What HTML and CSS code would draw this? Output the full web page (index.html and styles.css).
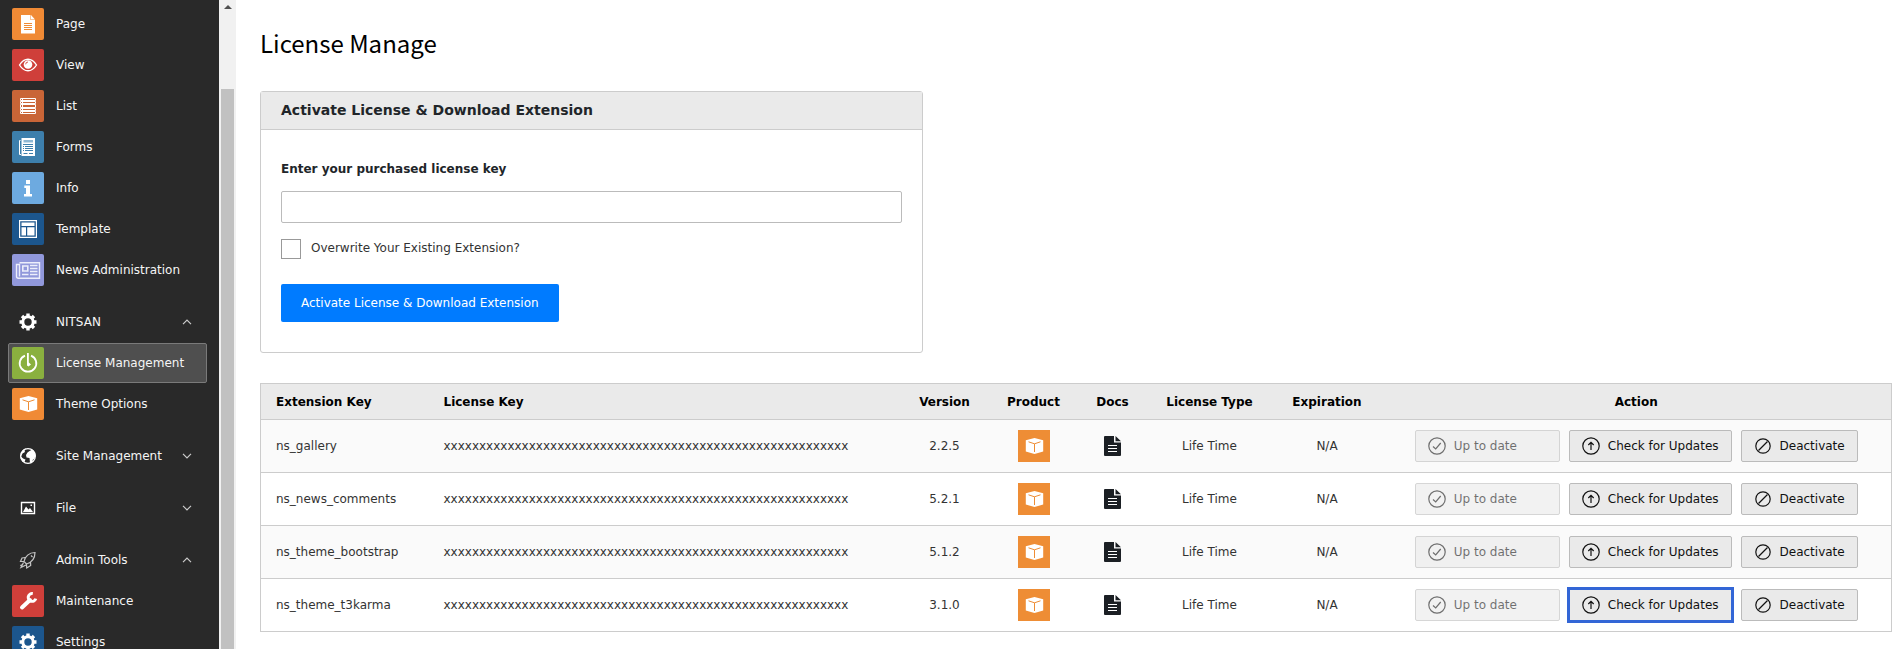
FILE: index.html
```
<!DOCTYPE html>
<html lang="en">
<head>
    <meta charset="UTF-8">
    <title>License Manage</title>
    <link rel="stylesheet" href="styles.css">
</head>
<body>
    <!-- Icon sprite -->
    <svg class="sprite" aria-hidden="true">
        <symbol id="i-page" viewBox="0 0 32 32">
            <path fill="#fff" d="M9 7h9.500v5H23v13.500H9z"/>
            <path fill="#fff" d="M19 7l4 4.400h-4z"/>
            <path stroke="#f08a35" d="M12 15.500h8M12 17.500h8M12 19.500h8M12 21.500h8"/>
        </symbol>
        <symbol id="i-view" viewBox="0 0 32 32">
            <path fill="none" stroke="#fff" stroke-width="1.400" d="M7.500 16C10 12 13 10.200 16 10.200S22 12 24.500 16C22 20 19 21.800 16 21.800S10 20 7.500 16z"/>
            <circle cx="16" cy="15.500" r="4.300" fill="#fff"/>
            <path fill="none" stroke="#cf3f3a" stroke-width=".9" d="M13.700 15.300a2.300 2.300 0 0 1 2.300-2.300"/>
        </symbol>
        <symbol id="i-list" viewBox="0 0 32 32">
            <path fill="#c96537" stroke="#fff" d="M8.500 8.500h15v2h-15zM8.500 11.500h15v2h-15zM8.500 14.500h15v3h-15zM8.500 18.500h15v2h-15zM8.500 21.500h15v2h-15z"/>
            <path stroke="#fff" d="M10.500 8v16"/>
        </symbol>
        <symbol id="i-forms" viewBox="0 0 32 32">
            <path fill="#fff" d="M9.500 7H23v18H9.500z"/>
            <path fill="none" stroke="#fff" d="M8.500 9.500h-1v14h1.500"/>
            <path fill="#8fb8d4" d="M11.500 9H21v2.500h-9.500z"/>
            <path stroke="#3d7fac" d="M11 13.500h10M11 15.500h1M13 15.500h8M11 17.500h1M13 17.500h8M11 19.500h1M13 19.500h8M11.500 22.500h4M17 22.500h4"/>
        </symbol>
        <symbol id="i-info" viewBox="0 0 32 32">
            <path fill="#fff" d="M14 8h4v4h-4zM12.300 13.500H18V22h2v2.500h-8V22h2v-6h-1.700z"/>
        </symbol>
        <symbol id="i-template" viewBox="0 0 32 32">
            <path fill="none" stroke="#fff" stroke-width="1.200" d="M7.600 7.600h16.800v16.800H7.600z"/>
            <path fill="#fff" d="M9.500 9.500h13V13h-13zM9.500 14.200h4.500v8.300H9.500zM15.200 14.200h7.300v8.300h-7.300z"/>
        </symbol>
        <symbol id="i-news" viewBox="0 0 32 32">
            <path fill="none" stroke="#eceefb" stroke-width="1.400" d="M7.500 8.700h20v15.600H6.500a2 2 0 0 1-2-2V10.500h3v12"/>
            <path fill="none" stroke="#eceefb" stroke-width="1.600" d="M10.800 12h5v5h-5z"/>
            <path stroke="#eceefb" stroke-width="1.300" d="M18 11.500h7.500M18 14.500h7.500M18 17.500h7.500M10 20.500h6.500M18 20.500h7.500"/>
        </symbol>
        <symbol id="i-power" viewBox="0 0 32 32">
            <path fill="none" stroke="#fff" stroke-width="1.800" d="M13 8.600a8.300 8.300 0 1 0 6 0"/>
            <path fill="#fff" d="M15 6h1.800v9.500l2.200 2-2.500 2-1.500-1z"/>
        </symbol>
        <symbol id="i-box" viewBox="0 0 32 32">
            <path fill="#fff" d="M16.500 8l8.700 2.200v11.300L16.500 24l-8.700-2.500V10.200z"/>
            <path fill="none" stroke="#ee8d35" stroke-width="1" d="M10.500 11.800l6 2 6-2M16.500 13.800v8.200"/>
        </symbol>
        <symbol id="i-gear" viewBox="0 0 32 32">
            <circle cx="16" cy="16" r="5.200" fill="none" stroke="#fff" stroke-width="3"/>
            <path stroke="#fff" stroke-width="3.400" d="M16 10.500v-3M16 21.500v3M10.500 16h-3M21.500 16h3M12.100 12.100L10 10M19.900 19.900L22 22M12.100 19.900L10 22M19.900 12.100L22 10"/>
        </symbol>
        <symbol id="i-globe" viewBox="0 0 32 32">
            <circle cx="16" cy="16" r="7.400" fill="none" stroke="#fff" stroke-width="1.200"/>
            <path fill="#fff" d="M14 8.500l-1.500 2 .5 1.500-2.500 1.500-1.500 3 1.500 1.500 1.500 1 1.500.5-1 2.500-2-.5-2-3.500.5-5 2.500-3.500zM17.500 11l3-1.500 2 2.500 1 3-1 4-1.500.5-1 3-2 .5-.5-5-3-.5-.5-2.500 1.500-2.500z"/>
        </symbol>
        <symbol id="i-image" viewBox="0 0 32 32">
            <path fill="none" stroke="#fff" stroke-width="1.400" d="M9.500 10.500h13v11h-13z"/>
            <path fill="#fff" d="M11 20l3-5.500 2.500 3 1.500-1.500 3 4zM18.500 12.500h1.500V14h-1.500z"/>
        </symbol>
        <symbol id="i-rocket" viewBox="0 0 32 32">
            <path fill="none" stroke="#c4c4c4" stroke-width="1.200" d="M12 17.500c1-5 5-9 11-9 0 6-3.500 10-8.500 11.500zM13.200 13.500l-3.200.5-1.500 3.500 3.500 0M18.500 18l.2 3.500-4 2.500-.2-4M11.500 18.500l-2.500 5 5-2.500M19 11.500l1.500 1.500M9.500 20.500l-1 1.500"/>
        </symbol>
        <symbol id="i-wrench" viewBox="0 0 32 32">
            <path stroke="#fff" stroke-width="4" stroke-linecap="round" d="M10 22.500l8-7.500"/>
            <path fill="none" stroke="#fff" stroke-width="3" d="M20.800 8.600a3.900 3.900 0 1 0 3 5"/>
        </symbol>
        <symbol id="i-doc" viewBox="0 0 17 20">
            <path fill="#1b1f24" d="M1 0h9v6.500h7V19a1 1 0 0 1-1 1H1a1 1 0 0 1-1-1V1a1 1 0 0 1 1-1zM11.500 0L17 5.300h-5.500z"/>
            <path stroke="#fff" stroke-width="1.200" d="M4 9.500h9M4 12.500h9M4 15.500h9"/>
        </symbol>
        <symbol id="i-check" viewBox="0 0 18 18">
            <circle cx="9" cy="9" r="8.200"/>
            <path d="M5 9.500l2.700 2.500 5-6"/>
        </symbol>
        <symbol id="i-up" viewBox="0 0 18 18">
            <circle cx="9" cy="9" r="8.200"/>
            <path d="M9 13V5.500M6.300 8L9 5.300 11.700 8"/>
        </symbol>
        <symbol id="i-ban" viewBox="0 0 18 18">
            <circle cx="9" cy="9" r="7.200"/>
            <path d="M4.500 13.500l9-9"/>
        </symbol>
        <symbol id="i-open" viewBox="0 0 10 6">
            <path fill="none" stroke="#ccc" stroke-width="1.200" d="M1 5.200l4-4 4 4"/>
        </symbol>
        <symbol id="i-closed" viewBox="0 0 10 6">
            <path fill="none" stroke="#ccc" stroke-width="1.200" d="M1 .8l4 4 4-4"/>
        </symbol>
    </svg>

    <div class="layout">
        <nav class="sidebar">
            <div class="menu-group">
                <a href="#" class="menu-item"><svg class="tile tile-orange"><use href="#i-page"/></svg>Page</a>
                <a href="#" class="menu-item"><svg class="tile tile-red"><use href="#i-view"/></svg>View</a>
                <a href="#" class="menu-item"><svg class="tile tile-rust"><use href="#i-list"/></svg>List</a>
                <a href="#" class="menu-item"><svg class="tile tile-steel"><use href="#i-forms"/></svg>Forms</a>
                <a href="#" class="menu-item"><svg class="tile tile-sky"><use href="#i-info"/></svg>Info</a>
                <a href="#" class="menu-item"><svg class="tile tile-navy"><use href="#i-template"/></svg>Template</a>
                <a href="#" class="menu-item"><svg class="tile tile-lilac"><use href="#i-news"/></svg>News Administration</a>
            </div>
            <div class="menu-group">
                <button type="button" class="menu-item" aria-expanded="true"><svg class="tile"><use href="#i-gear"/></svg>NITSAN<svg class="chevron"><use href="#i-open"/></svg></button>
                <a href="#" class="menu-item active"><svg class="tile tile-green"><use href="#i-power"/></svg>License Management</a>
                <a href="#" class="menu-item"><svg class="tile tile-orange"><use href="#i-box"/></svg>Theme Options</a>
            </div>
            <div class="menu-group">
                <button type="button" class="menu-item" aria-expanded="false"><svg class="tile"><use href="#i-globe"/></svg>Site Management<svg class="chevron"><use href="#i-closed"/></svg></button>
            </div>
            <div class="menu-group">
                <button type="button" class="menu-item" aria-expanded="false"><svg class="tile"><use href="#i-image"/></svg>File<svg class="chevron"><use href="#i-closed"/></svg></button>
            </div>
            <div class="menu-group">
                <button type="button" class="menu-item" aria-expanded="true"><svg class="tile"><use href="#i-rocket"/></svg>Admin Tools<svg class="chevron"><use href="#i-open"/></svg></button>
                <a href="#" class="menu-item"><svg class="tile tile-red"><use href="#i-wrench"/></svg>Maintenance</a>
                <a href="#" class="menu-item"><svg class="tile tile-navy"><use href="#i-gear"/></svg>Settings</a>
            </div>
        </nav>

        <div class="scrollbar" aria-hidden="true">
            <div class="scroll-up"></div>
            <div class="scroll-thumb"></div>
        </div>

        <main class="content">
            <h1>License Manage</h1>

            <form class="card">
                <h2 class="card-header">Activate License &amp; Download Extension</h2>
                <div class="card-body">
                    <label for="licenseKey" class="field-label">Enter your purchased license key</label>
                    <input type="text" id="licenseKey" class="field">
                    <div class="check-row">
                        <input type="checkbox" id="overwrite">
                        <label for="overwrite">Overwrite Your Existing Extension?</label>
                    </div>
                    <button type="button" class="btn-primary">Activate License &amp; Download Extension</button>
                </div>
            </form>

            <table class="licenses">
                <colgroup>
                    <col class="col-ext">
                    <col>
                    <col class="col-version">
                    <col class="col-product">
                    <col class="col-docs">
                    <col class="col-type">
                    <col class="col-expiration">
                    <col class="col-action">
                </colgroup>
                <thead>
                    <tr>
                        <th class="left">Extension Key</th>
                        <th class="left">License Key</th>
                        <th>Version</th>
                        <th>Product</th>
                        <th>Docs</th>
                        <th>License Type</th>
                        <th>Expiration</th>
                        <th>Action</th>
                    </tr>
                </thead>
                <tbody>
                    <tr>
                        <td class="left">ns_gallery</td>
                        <td class="left">xxxxxxxxxxxxxxxxxxxxxxxxxxxxxxxxxxxxxxxxxxxxxxxxxxxxxxxxx</td>
                        <td>2.2.5</td>
                        <td><a href="#" aria-label="Product"><svg class="product"><use href="#i-box"/></svg></a></td>
                        <td><a href="#" aria-label="Docs"><svg class="doc"><use href="#i-doc"/></svg></a></td>
                        <td>Life Time</td>
                        <td>N/A</td>
                        <td>
                            <div class="actions">
                                <button type="button" class="btn btn-status" disabled><svg><use href="#i-check"/></svg>Up to date</button>
                                <button type="button" class="btn"><svg><use href="#i-up"/></svg>Check for Updates</button>
                                <button type="button" class="btn"><svg><use href="#i-ban"/></svg>Deactivate</button>
                            </div>
                        </td>
                    </tr>
                    <tr>
                        <td class="left">ns_news_comments</td>
                        <td class="left">xxxxxxxxxxxxxxxxxxxxxxxxxxxxxxxxxxxxxxxxxxxxxxxxxxxxxxxxx</td>
                        <td>5.2.1</td>
                        <td><a href="#" aria-label="Product"><svg class="product"><use href="#i-box"/></svg></a></td>
                        <td><a href="#" aria-label="Docs"><svg class="doc"><use href="#i-doc"/></svg></a></td>
                        <td>Life Time</td>
                        <td>N/A</td>
                        <td>
                            <div class="actions">
                                <button type="button" class="btn btn-status" disabled><svg><use href="#i-check"/></svg>Up to date</button>
                                <button type="button" class="btn"><svg><use href="#i-up"/></svg>Check for Updates</button>
                                <button type="button" class="btn"><svg><use href="#i-ban"/></svg>Deactivate</button>
                            </div>
                        </td>
                    </tr>
                    <tr>
                        <td class="left">ns_theme_bootstrap</td>
                        <td class="left">xxxxxxxxxxxxxxxxxxxxxxxxxxxxxxxxxxxxxxxxxxxxxxxxxxxxxxxxx</td>
                        <td>5.1.2</td>
                        <td><a href="#" aria-label="Product"><svg class="product"><use href="#i-box"/></svg></a></td>
                        <td><a href="#" aria-label="Docs"><svg class="doc"><use href="#i-doc"/></svg></a></td>
                        <td>Life Time</td>
                        <td>N/A</td>
                        <td>
                            <div class="actions">
                                <button type="button" class="btn btn-status" disabled><svg><use href="#i-check"/></svg>Up to date</button>
                                <button type="button" class="btn"><svg><use href="#i-up"/></svg>Check for Updates</button>
                                <button type="button" class="btn"><svg><use href="#i-ban"/></svg>Deactivate</button>
                            </div>
                        </td>
                    </tr>
                    <tr>
                        <td class="left">ns_theme_t3karma</td>
                        <td class="left">xxxxxxxxxxxxxxxxxxxxxxxxxxxxxxxxxxxxxxxxxxxxxxxxxxxxxxxxx</td>
                        <td>3.1.0</td>
                        <td><a href="#" aria-label="Product"><svg class="product"><use href="#i-box"/></svg></a></td>
                        <td><a href="#" aria-label="Docs"><svg class="doc"><use href="#i-doc"/></svg></a></td>
                        <td>Life Time</td>
                        <td>N/A</td>
                        <td>
                            <div class="actions">
                                <button type="button" class="btn btn-status" disabled><svg><use href="#i-check"/></svg>Up to date</button>
                                <button type="button" class="btn highlighted"><svg><use href="#i-up"/></svg>Check for Updates</button>
                                <button type="button" class="btn"><svg><use href="#i-ban"/></svg>Deactivate</button>
                            </div>
                        </td>
                    </tr>
                </tbody>
            </table>
        </main>
    </div>
</body>
</html>
```
FILE: styles.css
```
* {
    box-sizing: border-box;
}
body {
    margin: 0;
    font-family: Verdana, "DejaVu Sans", sans-serif;
    font-size: 12px;
    line-height: 18px;
    color: #333;
    background-color: #fff;
}
button, input {
    font: inherit;
}
.sprite {
    display: none;
}
.layout {
    display: flex;
    height: 100vh;
    overflow: hidden;
}

/* Sidebar */
.sidebar {
    flex: none;
    width: 219px;
    padding: 4px 12px 0 8px;
    background-color: #292929;
    overflow: hidden;
}
.menu-group {
    display: flex;
    flex-direction: column;
    gap: 1px;
    margin-bottom: 12px;
}
.menu-item {
    display: flex;
    align-items: center;
    gap: 12px;
    width: 100%;
    height: 40px;
    padding: 3px;
    border: 1px solid transparent;
    border-radius: 2px;
    background: none;
    color: #f5f5f5;
    text-align: left;
    text-decoration: none;
}
.menu-item.active {
    background-color: #4f4f4f;
    border-color: #7a7a7a;
}
.tile {
    flex: none;
    width: 32px;
    height: 32px;
    border-radius: 2px;
}
.tile-orange { background-color: #f08a35; }
.tile-red { background-color: #cf3f3a; }
.tile-rust { background-color: #c96537; }
.tile-steel { background-color: #3d7fac; }
.tile-sky { background-color: #6daae0; }
.tile-navy { background-color: #1c568d; }
.tile-lilac { background-color: #9198db; }
.tile-green { background-color: #8ab03f; }
.chevron {
    width: 10px;
    height: 6px;
    margin-left: auto;
    margin-right: 11px;
}

/* Sidebar scrollbar */
.scrollbar {
    display: flex;
    flex-direction: column;
    flex: none;
    width: 17px;
    padding: 5px 2px 0;
    background-color: #f1f1f1;
}
.scroll-up {
    align-self: center;
    border: 4px solid transparent;
    border-top-width: 0;
    border-bottom-color: #505050;
    margin-bottom: 80px;
}
.scroll-thumb {
    flex: 1;
    background-color: #c1c1c1;
}

/* Content */
.content {
    flex: 1;
    min-width: 0;
    padding: 23px 6px 0 24px;
}
h1 {
    margin: 0 0 28px;
    font-family: "Source Sans Pro", "Noto Sans CJK SC", sans-serif;
    font-size: 24px;
    font-weight: 400;
    line-height: 40px;
    color: #000;
}
.card {
    max-width: 663px;
    margin-bottom: 30px;
    border: 1px solid #ccc;
    border-radius: 3px;
}
.card-header {
    margin: 0;
    padding: 9px 20px 10px;
    border-bottom: 1px solid #ccc;
    background-color: #eaeaea;
    font-size: 14px;
    line-height: 18px;
    color: #212529;
}
.card-body {
    padding: 30px 20px;
}
.field-label {
    display: block;
    margin-bottom: 13px;
    font-weight: bold;
    color: #212529;
}
.field {
    display: block;
    width: 100%;
    height: 32px;
    padding: 6px 12px;
    border: 1px solid #bbb;
    border-radius: 2px;
}
.check-row {
    display: flex;
    gap: 10px;
    margin: 16px 0 25px;
}
.check-row input {
    appearance: none;
    width: 20px;
    height: 20px;
    margin: 0;
    border: 1px solid #999;
}
.btn-primary {
    display: block;
    padding: 10px 20px;
    border: 0;
    border-radius: 2px;
    background-color: #007bff;
    color: #fff;
}

/* License table */
.licenses {
    width: 100%;
    table-layout: fixed;
    border-collapse: collapse;
    border: 1px solid #ccc;
}
.col-ext { width: 168px; }
.col-version { width: 88px; }
.col-product { width: 90px; }
.col-docs { width: 68px; }
.col-type { width: 126px; }
.col-expiration { width: 109px; }
.col-action { width: 510px; }
.licenses th,
.licenses td {
    padding: 0;
    border-bottom: 1px solid #ccc;
    text-align: center;
    white-space: nowrap;
}
.licenses th {
    height: 36px;
    background-color: #eaeaea;
    color: #000;
}
.licenses td {
    height: 53px;
}
.licenses .left {
    padding-left: 15px;
    text-align: left;
}
.licenses tbody tr:nth-child(odd) {
    background-color: #fafafa;
}
.licenses a {
    display: inline-block;
    vertical-align: middle;
}
.licenses svg {
    display: block;
}
.product {
    width: 32px;
    height: 32px;
    background-color: #ee8d35;
}
.doc {
    width: 17px;
    height: 20px;
}
.actions {
    display: flex;
    justify-content: center;
    gap: 9px;
}
.btn {
    display: flex;
    align-items: center;
    gap: 8px;
    height: 32px;
    padding: 0 12px;
    border: 1px solid #bbb;
    border-radius: 2px;
    background-color: #eaeaea;
    color: #111;
}
.btn svg {
    width: 18px;
    height: 18px;
    fill: none;
    stroke: currentColor;
    stroke-width: 1.2;
}
.btn-status {
    width: 145px;
}
.btn:disabled {
    opacity: .6;
}
.highlighted {
    border-radius: 0;
    outline: 3px solid #3366d6;
    outline-offset: -1px;
}
```
